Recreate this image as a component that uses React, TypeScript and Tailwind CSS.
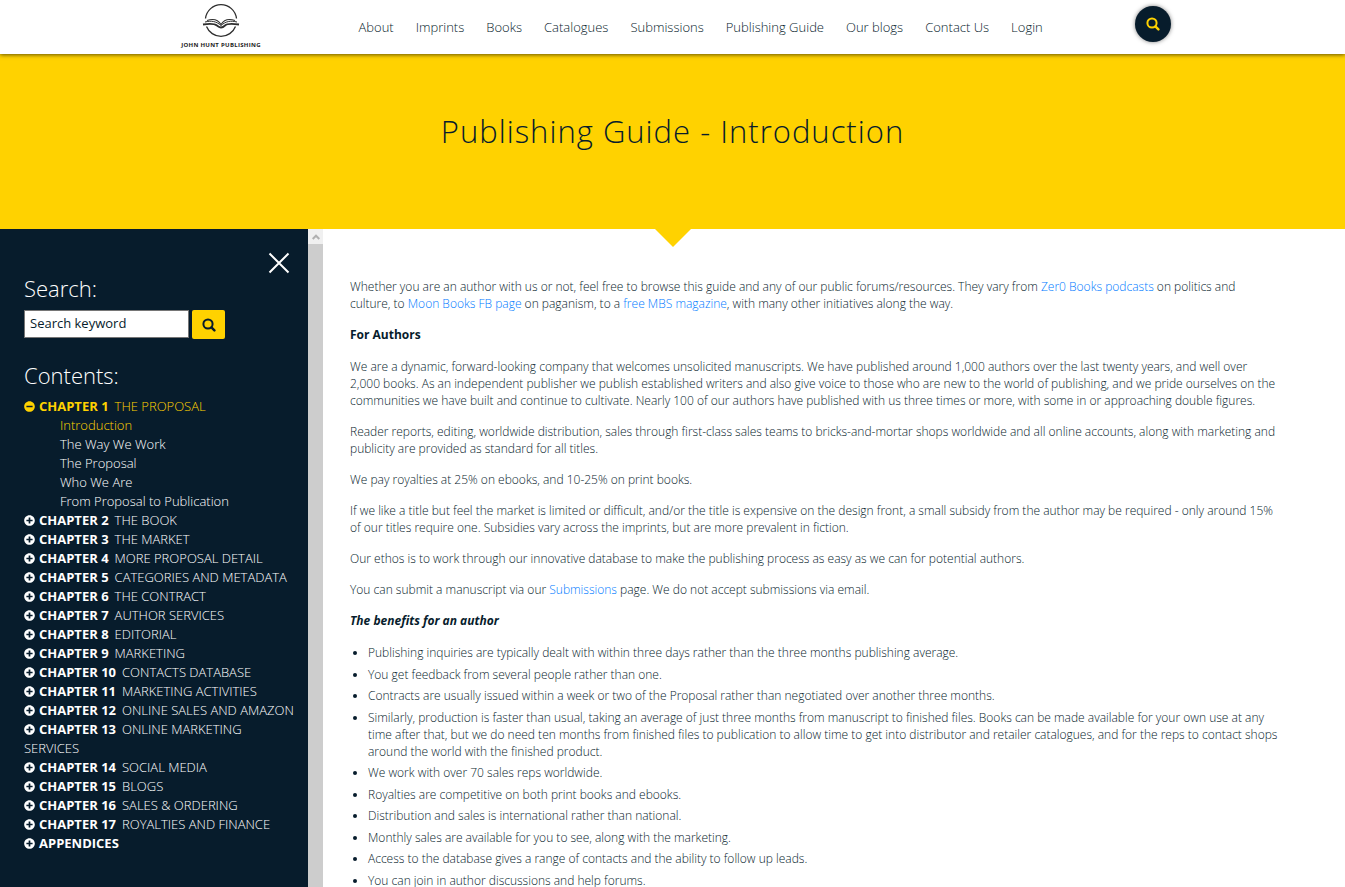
import { useState } from 'react';
import { FaMinusCircle, FaPlusCircle } from 'react-icons/fa';

type Chapter = {
  label: string;
  title?: string;
  pages?: string[];
};

const navItems = [
  'About',
  'Imprints',
  'Books',
  'Catalogues',
  'Submissions',
  'Publishing Guide',
  'Our blogs',
  'Contact Us',
  'Login',
];

const chapters: Chapter[] = [
  {
    label: 'CHAPTER 1',
    title: 'THE PROPOSAL',
    pages: [
      'Introduction',
      'The Way We Work',
      'The Proposal',
      'Who We Are',
      'From Proposal to Publication',
    ],
  },
  { label: 'CHAPTER 2', title: 'THE BOOK' },
  { label: 'CHAPTER 3', title: 'THE MARKET' },
  { label: 'CHAPTER 4', title: 'MORE PROPOSAL DETAIL' },
  { label: 'CHAPTER 5', title: 'CATEGORIES AND METADATA' },
  { label: 'CHAPTER 6', title: 'THE CONTRACT' },
  { label: 'CHAPTER 7', title: 'AUTHOR SERVICES' },
  { label: 'CHAPTER 8', title: 'EDITORIAL' },
  { label: 'CHAPTER 9', title: 'MARKETING' },
  { label: 'CHAPTER 10', title: 'CONTACTS DATABASE' },
  { label: 'CHAPTER 11', title: 'MARKETING ACTIVITIES' },
  { label: 'CHAPTER 12', title: 'ONLINE SALES AND AMAZON' },
  { label: 'CHAPTER 13', title: 'ONLINE MARKETING SERVICES' },
  { label: 'CHAPTER 14', title: 'SOCIAL MEDIA' },
  { label: 'CHAPTER 15', title: 'BLOGS' },
  { label: 'CHAPTER 16', title: 'SALES & ORDERING' },
  { label: 'CHAPTER 17', title: 'ROYALTIES AND FINANCE' },
  { label: 'APPENDICES' },
];

const benefits = [
  'Publishing inquiries are typically dealt with within three days rather than the three months publishing average.',
  'You get feedback from several people rather than one.',
  'Contracts are usually issued within a week or two of the Proposal rather than negotiated over another three months.',
  'Similarly, production is faster than usual, taking an average of just three months from manuscript to finished files. Books can be made available for your own use at any time after that, but we do need ten months from finished files to publication to allow time to get into distributor and retailer catalogues, and for the reps to contact shops around the world with the finished product.',
  'We work with over 70 sales reps worldwide.',
  'Royalties are competitive on both print books and ebooks.',
  'Distribution and sales is international rather than national.',
  'Monthly sales are available for you to see, along with the marketing.',
  'Access to the database gives a range of contacts and the ability to follow up leads.',
  'You can join in author discussions and help forums.',
];

function SearchIcon({ className }: { className: string }) {
  return (
    <svg viewBox="0 0 14 14" className={className} fill="none" stroke="currentColor" aria-hidden="true">
      <circle cx="6" cy="6" r="4.6" strokeWidth="2" />
      <path d="M9.4 9.4 12.4 12.4" strokeWidth="2.4" strokeLinecap="round" />
    </svg>
  );
}

function Logo() {
  return (
    <svg viewBox="-4 0 92 48" className="h-12 w-[92px]" role="img" aria-label="John Hunt Publishing">
      <g fill="none" stroke="#2f2f2f">
        <path d="M26.500 15.500a15.600 15.600 0 0 1 31 0M27.500 23.500a15.600 15.600 0 0 0 29 0" strokeWidth="1.300" />
        <path d="M24 21.500c7-1 12-.5 14 1s2.500 2 4 2 2.500-.5 4-2 7-2 14-1" strokeWidth="1.800" />
        <path d="M26 19c6-1.500 11-1 16 3.500 5-4.500 10-5 16-3.500" strokeWidth="1" />
        <path d="M28 17.500c6-2 11-1 14 4 3-5 8-6 14-4" strokeWidth="1.100" />
      </g>
      <text
        x="42"
        y="44"
        textAnchor="middle"
        fill="#222"
        className="font-['Open_Sans',sans-serif] text-[6px] font-bold tracking-wider"
      >
        JOHN HUNT PUBLISHING
      </text>
    </svg>
  );
}

function Header() {
  return (
    <header className="relative z-10 bg-white shadow-[0_1px_4px_rgba(0,0,0,0.6)]">
      <div className="mx-auto flex h-[54px] max-w-[996px] items-center">
        <a href="#home" className="mr-23 shrink-0">
          <Logo />
        </a>
        <nav className="flex gap-[22px] pt-0.5 text-[13px] font-light whitespace-nowrap">
          {navItems.map((item) => (
            <a key={item} href="#nav">
              {item}
            </a>
          ))}
        </nav>
        <button
          type="button"
          aria-label="Search site"
          className="mb-1.5 ml-auto flex size-9 shrink-0 items-center justify-center rounded-full bg-[#071c2c] text-[#ffd200] shadow-[0_0_4px_rgba(0,0,0,0.5)]"
        >
          <SearchIcon className="size-3.5" />
        </button>
      </div>
    </header>
  );
}

function Sidebar() {
  const [keyword, setKeyword] = useState('');
  const [open, setOpen] = useState('CHAPTER 1');

  return (
    <aside className="flex shrink-0">
      <div className="w-[308px] bg-[#071c2c] pt-[23px] pr-2.5 pb-8 pl-6 text-[13px] leading-[19px] font-light text-white">
        <div className="flex justify-end pr-2">
          <button type="button" aria-label="Close contents">
            <svg viewBox="0 0 22 22" className="size-[22px]" stroke="currentColor" strokeWidth="2" aria-hidden="true">
              <path d="M1.500 1.500 20.500 20.500M20.500 1.500 1.500 20.500" />
            </svg>
          </button>
        </div>

        <h2 className="text-[22px] leading-7">
          <label htmlFor="keyword">Search:</label>
        </h2>
        <form className="mt-2 flex gap-[3px]" onSubmit={(e) => e.preventDefault()}>
          <input
            id="keyword"
            type="text"
            value={keyword}
            onChange={(e) => setKeyword(e.target.value)}
            placeholder="Search keyword"
            className="h-7 w-[165px] border border-[#767676] bg-white px-[5px] pb-0.5 text-[13px] font-normal text-[#071c2c] placeholder:text-[#071c2c] placeholder:opacity-100"
          />
          <button
            type="submit"
            aria-label="Search guide"
            className="flex h-[29px] w-[33px] items-center justify-center rounded-xs bg-[#ffd200] text-[#071c2c]"
          >
            <SearchIcon className="size-3.5" />
          </button>
        </form>

        <h2 className="mt-[22px] mb-2 text-[22px] leading-7">Contents:</h2>
        <ul>
          {chapters.map((chapter) => {
            const isOpen = chapter.label === open;
            const Icon = isOpen ? FaMinusCircle : FaPlusCircle;
            return (
              <li key={chapter.label}>
                <a
                  href="#chapter"
                  onClick={() => setOpen(isOpen ? '' : chapter.label)}
                  className={isOpen ? 'text-[#ffd200]' : ''}
                >
                  <Icon className="mr-1 inline-block size-[11px] align-[-1px]" />
                  <strong className="mr-1.5 font-bold">{chapter.label}</strong>
                  {chapter.title}
                </a>
                {isOpen && chapter.pages && (
                  <ul className="pl-9">
                    {chapter.pages.map((page, i) => (
                      <li key={page}>
                        <a href="#page" className={i === 0 ? 'text-[#ffd200]' : ''}>
                          {page}
                        </a>
                      </li>
                    ))}
                  </ul>
                )}
              </li>
            );
          })}
        </ul>
      </div>
      <div className="w-[15px] bg-[#cdcdcd]">
        <div className="flex h-[15px] items-center justify-center bg-[#f0f0f0] text-[#b0b0b0]">
          <svg viewBox="0 0 8 6" className="h-1.5 w-2" fill="none" stroke="currentColor" strokeWidth="2" aria-hidden="true">
            <path d="M0.700 5 4 1.700 7.300 5" />
          </svg>
        </div>
      </div>
    </aside>
  );
}

function GuideLink({ children }: { children: string }) {
  return (
    <a href="#link" className="text-[#007bff]">
      {children}
    </a>
  );
}

function Article() {
  return (
    <main className="min-w-0 flex-1 pt-[49px] pr-[67px] pl-[27px] text-[12px] leading-[17px] font-light">
      <div className="space-y-3.5">
        <p>
          Whether you are an author with us or not, feel free to browse this guide and any of our public
          forums/resources. They vary from <GuideLink>Zer0 Books podcasts</GuideLink> on politics and culture, to{' '}
          <GuideLink>Moon Books FB page</GuideLink> on paganism, to a <GuideLink>free MBS magazine</GuideLink>, with
          many other initiatives along the way.
        </p>
        <h3 className="mb-[15px] font-bold">For Authors</h3>
        <p>
          We are a dynamic, forward-looking company that welcomes unsolicited manuscripts. We have published around
          1,000 authors over the last twenty years, and well over 2,000 books. As an independent publisher we publish
          established writers and also give voice to those who are new to the world of publishing, and we pride
          ourselves on the communities we have built and continue to cultivate. Nearly 100 of our authors have
          published with us three times or more, with some in or approaching double figures.
        </p>
        <p>
          Reader reports, editing, worldwide distribution, sales through first-class sales teams to
          bricks-and-mortar shops worldwide and all online accounts, along with marketing and publicity are provided
          as standard for all titles.
        </p>
        <p>We pay royalties at 25% on ebooks, and 10-25% on print books.</p>
        <p>
          If we like a title but feel the market is limited or difficult, and/or the title is expensive on the design
          front, a small subsidy from the author may be required - only around 15% of our titles require one.
          Subsidies vary across the imprints, but are more prevalent in fiction.
        </p>
        <p>
          Our ethos is to work through our innovative database to make the publishing process as easy as we can for
          potential authors.
        </p>
        <p>
          You can submit a manuscript via our <GuideLink>Submissions</GuideLink> page. We do not accept submissions
          via email.
        </p>
        <h3 className="mb-[15px] font-bold italic">The benefits for an author</h3>
      </div>
      <ul className="list-disc pl-[18px]">
        {benefits.map((benefit) => (
          <li key={benefit} className="odd:mb-[5px] even:mb-1">
            {benefit}
          </li>
        ))}
      </ul>
    </main>
  );
}

export default function App() {
  return (
    <div className="bg-white font-['Open_Sans',sans-serif] text-[#071c2c]">
      <Header />
      <section className="relative bg-[#ffd200] pt-[53px] pb-[74px] text-center">
        <h1 className="text-[31px] leading-[48px] font-light tracking-[1px]">Publishing Guide - Introduction</h1>
        <svg
          viewBox="0 0 36 18"
          className="absolute top-full left-1/2 h-[18px] w-9 -translate-x-1/2 text-[#ffd200]"
          aria-hidden="true"
        >
          <path d="M0 0H36L18 18Z" fill="currentColor" />
        </svg>
      </section>
      <div className="flex">
        <Sidebar />
        <Article />
      </div>
    </div>
  );
}
